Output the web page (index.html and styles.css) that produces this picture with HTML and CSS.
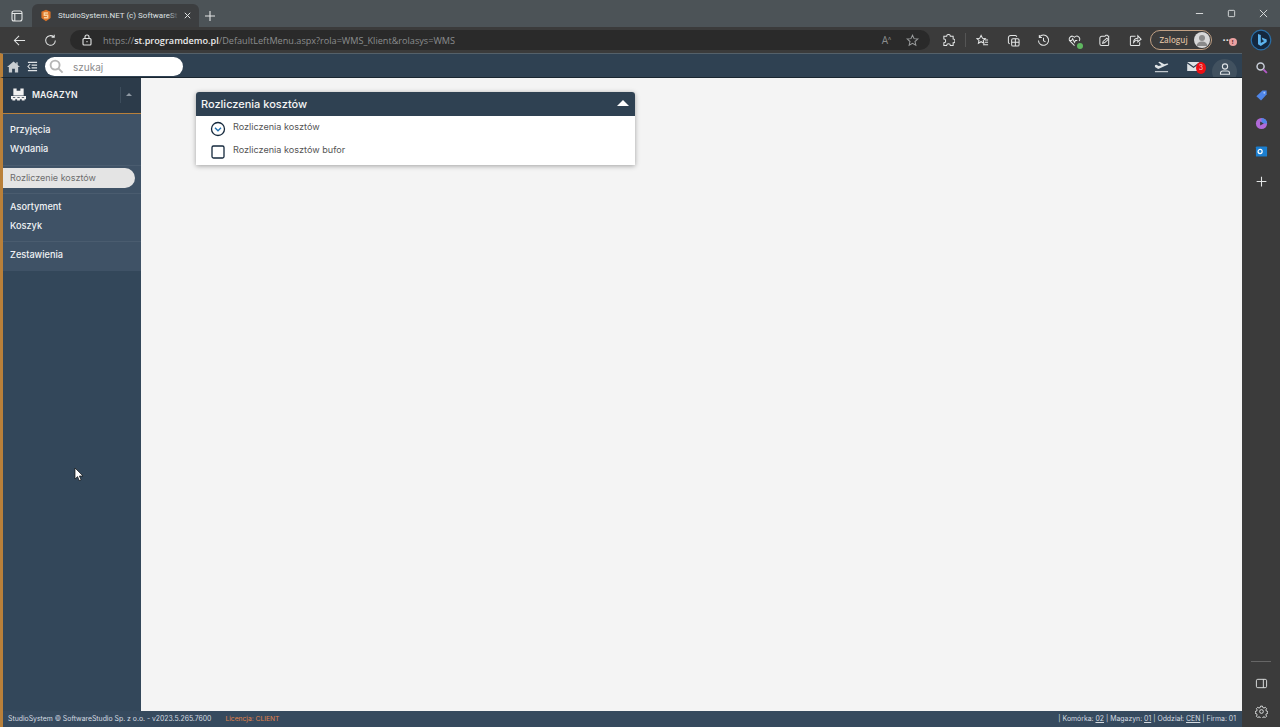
FILE: index.html
```html
<!DOCTYPE html>
<html lang="pl">
<head>
<meta charset="utf-8">
<title>StudioSystem.NET</title>
<link rel="stylesheet" href="styles.css">
</head>
<body>
<div class="tabstrip">
  <svg class="ico tabs-ico" viewBox="0 0 12 12"><rect x="1" y="1" width="10" height="10" rx="2"/><path d="M1 3.5h10M3.8 3.5V11"/></svg>
  <div class="tab">
    <svg class="fav" viewBox="0 0 12 14"><path class="fav-bg" d="M6 0l5.5 2.5V10L6 14 .5 10V2.5z"/><path class="fav-s" d="M8.500 4H4v2.800h4v3H3.500"/></svg>
    <span class="tab-title">StudioSystem.NET (c) SoftwareSt</span>
    <span class="tab-fade"></span>
    <svg class="ico tab-x" viewBox="0 0 10 10"><path d="M2 2l6 6M8 2l-6 6"/></svg>
  </div>
  <svg class="ico new-tab" viewBox="0 0 12 12"><path d="M6 1v10M1 6h10"/></svg>
  <div class="win-controls">
    <svg class="ico win" viewBox="0 0 10 10"><path d="M1 5h8"/></svg>
    <svg class="ico win" viewBox="0 0 10 10"><rect x="1.500" y="1.500" width="7" height="7" rx="1"/></svg>
    <svg class="ico win" viewBox="0 0 10 10"><path d="M1 1l8 8M9 1l-8 8"/></svg>
  </div>
</div>
<div class="toolbar">
  <svg class="ico nav back" viewBox="0 0 14 14"><path d="M13 7H1.500M6.500 2L1.500 7l5 5"/></svg>
  <svg class="ico nav reload" viewBox="0 0 14 14"><path d="M12.200 7a5.200 5.200 0 1 1-1.600-3.800M11 .8v2.800H8.200"/></svg>
  <div class="address">
    <svg class="ico lock" viewBox="0 0 12 12"><rect x="2" y="4.500" width="8" height="6.500" rx="1"/><path d="M4 4.500V3a2 2 0 0 1 4 0v1.500"/><path d="M6 7v1.200"/></svg>
    <span class="url"><span class="url-dim">https://</span><b class="url-host">st.programdemo.pl</b><span class="url-dim">/DefaultLeftMenu.aspx?rola=WMS_Klient&amp;rolasys=WMS</span></span>
    <span class="address-tools">
      <span class="read-a">A<sup>ᴧ</sup></span>
      <svg class="ico tool dim" viewBox="0 0 14 14"><path d="M7 1.300l1.700 3.700 4 .4-3 2.700.9 4L7 10.100l-3.600 2 .9-4-3-2.700 4-.4z"/></svg>
    </span>
  </div>
  <div class="tools">
    <svg class="ico tool" viewBox="0 0 14 14"><path d="M5 2.500a2 2 0 0 1 4 0h3v3a2 2 0 0 1 0 4v3H9a2 2 0 0 0-4 0H2v-3a2 2 0 0 0 0-4v-3z"/></svg>
    <span class="tool-sep"></span>
    <svg class="ico tool" viewBox="0 0 14 14"><path d="M5.500 1.500L7 4.600l3 .3-2.200 2 .6 3-2.900-1.600-2.900 1.600.6-3L1 4.900l3-.3zM9.500 6.500H13M9.500 9H13M7.500 11.500H13"/></svg>
    <svg class="ico tool" viewBox="0 0 14 14"><rect x="5" y="5" width="8" height="8" rx="1.500"/><path d="M9 5v8M5 9h8M3 10.500A2 2 0 0 1 1.500 9V4A2.500 2.500 0 0 1 4 1.500h5A2 2 0 0 1 10.500 3"/></svg>
    <svg class="ico tool" viewBox="0 0 14 14"><path d="M2.500 3.500a5.500 5.500 0 1 1-1 3.500M2.500 1v2.800h2.800M7 4v3.200l2.200 1.300"/></svg>
    <span class="tool-wrap">
      <svg class="ico tool" viewBox="0 0 14 14"><path d="M7 12.500L2 7.500a3 3 0 0 1 5-4 3 3 0 0 1 5 4M1 7h3l1-2 2 4 1-2h2"/></svg>
      <span class="green-dot"></span>
    </span>
    <svg class="ico tool" viewBox="0 0 14 14"><path d="M4 2.500h3.500l1-1.200h1.500l1 1.200h.5v9a1 1 0 0 1-1 1H4a2 2 0 0 1-2-2v-6a2 2 0 0 1 2-2z"/><path d="M5 10l.5-2 4-3.500 1.500 1.500-4 3.500z"/></svg>
    <svg class="ico tool" viewBox="0 0 14 14"><path d="M7 2.500H2.500a1 1 0 0 0-1 1v8a1 1 0 0 0 1 1h8a1 1 0 0 0 1-1V9M5 9c0-3 2-4.500 4.500-4.500V2L13 5.500 9.500 8.500V6.500C7.500 6.500 6 7.500 5 9z"/></svg>
    <div class="signin">
      <span>Zaloguj</span>
      <span class="avatar"><svg viewBox="0 0 16 16"><circle cx="8" cy="6" r="3"/><path d="M2.500 14a5.500 4.500 0 0 1 11 0z"/></svg></span>
    </div>
    <span class="more">···<span class="more-badge">!</span></span>
  </div>
  <svg class="bing" viewBox="0 0 22 22"><circle cx="11" cy="11" r="9.800"/><path d="M8 5l2.800 1v8l3.600-2-1.700-.8-1-2.600 5 1.800v2.600L10.800 17 8 15.300z"/></svg>
</div>
<div class="workspace">
  <div class="app">
    <header class="appbar">
      <svg class="bar-ico home" viewBox="0 0 14 12"><path d="M7 0L0 6h2v6h3.500V8h3v4H12V6h2l-2.500-2.200V1H10v1.500z"/></svg>
      <svg class="bar-ico indent" viewBox="0 0 12 12"><path d="M1 1.500h10M5 4.500h6M5 7.500h6M1 10.500h10M3.500 3.500L1 6l2.500 2.500"/></svg>
      <div class="search">
        <svg class="search-ico" viewBox="0 0 16 16"><circle cx="6.500" cy="6.500" r="4.800"/><path d="M10 10l4.500 4.500"/></svg>
        <span class="search-text">szukaj</span>
      </div>
      <div class="bar-right">
        <svg class="bar-ico plane" viewBox="0 0 16 12"><path d="M1 11h14"/><path class="solid" d="M1 4l1.500-.5 2.500 1.500 3-1-3.500-3L6 .5l5 2.500 3-.8c1.500-.2 1.500 1 .5 1.500L4.500 8 1 6z"/></svg>
        <span class="mail">
          <svg class="bar-ico" viewBox="0 0 14 10"><path class="solid" d="M0 0h14L7 5zM0 1.800V10h14V1.800L7 6.800z"/></svg>
          <span class="mail-badge">3</span>
        </span>
        <span class="user-circle">
          <svg class="bar-ico" viewBox="0 0 12 12"><circle cx="6" cy="3.500" r="2.600"/><path d="M1.500 11.300V10a2 2 0 0 1 2-2h5a2 2 0 0 1 2 2v1.300z"/></svg>
        </span>
      </div>
    </header>
    <div class="app-main">
      <aside class="sidebar">
        <div class="side-head">
          <svg class="side-logo" viewBox="0 0 16 13"><path d="M2.500 0h3.500v2.500h4V0h3.500v7.500h-11zM0 8h16v3.500h-1.500V13h-3v-1.500h-2V13h-3v-1.500h-2V13h-3v-1.500H0zM2 9.300v1h2.500v-1zM6.800 9.300v1h2.500v-1zM11.500 9.300v1H14v-1z"/></svg>
          <span class="side-title">MAGAZYN</span>
          <span class="side-caret"></span>
        </div>
        <nav class="side-menu">
          <div class="menu-group first">
            <a class="menu-item">Przyjęcia</a>
            <a class="menu-item">Wydania</a>
          </div>
          <div class="menu-group single">
            <a class="menu-item active">Rozliczenie kosztów</a>
          </div>
          <div class="menu-group">
            <a class="menu-item">Asortyment</a>
            <a class="menu-item">Koszyk</a>
          </div>
          <div class="menu-group last">
            <a class="menu-item">Zestawienia</a>
          </div>
        </nav>
        <svg class="cursor" viewBox="0 0 10 15"><path d="M1 1v11l2.600-2.400 1.600 4 1.900-.8-1.700-3.800H9z"/></svg>
      </aside>
      <main class="content">
        <section class="panel">
          <div class="panel-head">
            <h2 class="panel-title">Rozliczenia kosztów</h2>
            <span class="panel-caret"></span>
          </div>
          <div class="panel-body">
            <div class="panel-row">
              <svg class="row-ico" viewBox="0 0 16 16"><circle cx="8" cy="8" r="6.500"/><path class="chev" d="M5 6.800l3 3 3-3"/></svg>
              <span class="row-text">Rozliczenia kosztów</span>
            </div>
            <div class="panel-row">
              <svg class="row-ico" viewBox="0 0 16 16"><rect x="2" y="2" width="12" height="12" rx="1.500"/></svg>
              <span class="row-text">Rozliczenia kosztów bufor</span>
            </div>
          </div>
        </section>
      </main>
    </div>
    <footer class="statusbar">
      <span class="status-copy">StudioSystem © SoftwareStudio Sp. z o.o. - v2023.5.265.7600</span>
      <span class="status-lic">Licencja: CLIENT</span>
      <span class="status-right">| Komórka: <u>02</u> | Magazyn: <u>01</u> | Oddział: <u>CEN</u> | Firma: 01</span>
    </footer>
  </div>
  <aside class="edgebar">
    <div class="edge-top">
      <svg class="edge-ico" viewBox="0 0 14 14"><circle class="e-stroke-grey" cx="6" cy="6" r="3.800"/><path class="e-stroke-purple" d="M9 9l3.800 3.800"/></svg>
      <svg class="edge-ico" viewBox="0 0 14 14"><path class="e-blue" d="M8 1.500h4.500V6L6.500 12.500 1.500 7.800z"/><circle class="e-hole" cx="10" cy="4" r="1"/></svg>
      <svg class="edge-ico" viewBox="0 0 14 14"><circle class="e-purple" cx="7" cy="7" r="6"/><path class="e-blue" d="M7 1a6 6 0 0 1 6 6L7 7z"/><path class="e-hole2" d="M5.500 4.800l4 2.200-4 2.200z"/></svg>
      <svg class="edge-ico" viewBox="0 0 14 14"><rect class="e-outlook" x="1" y="1.500" width="12" height="11" rx="1"/><circle class="e-o" cx="5.500" cy="7" r="2.200"/></svg>
      <svg class="edge-ico plus edge-add" viewBox="0 0 12 12"><path d="M6 1.500v9M1.500 6h9"/></svg>
    </div>
    <div class="edge-bottom">
      <span class="edge-rule"></span>
      <svg class="edge-ico plus" viewBox="0 0 14 14"><rect x="1.500" y="2.500" width="11" height="9" rx="1.500"/><path d="M9 2.500v9"/></svg>
      <svg class="edge-ico plus" viewBox="0 0 14 14"><circle cx="7" cy="7" r="2"/><path d="M6 1.200h2l.4 1.500 1.300.6 1.400-.8 1.400 1.400-.8 1.400.6 1.300 1.500.4v2l-1.500.4-.6 1.300.8 1.400-1.400 1.400-1.400-.8-1.300.6-.4 1.300H6l-.4-1.300-1.300-.6-1.400.8-1.400-1.400.8-1.400-.6-1.300-1.500-.4v-2l1.500-.4.6-1.300-.8-1.400 1.400-1.400 1.400.8 1.300-.6z"/></svg>
    </div>
  </aside>
</div>
</body>
</html>
```
FILE: styles.css
```css
* { box-sizing: border-box; }
html, body { margin: 0; height: 100%; }
body {
  width: 1280px;
  height: 727px;
  overflow: hidden;
  display: flex;
  flex-direction: column;
  font-family: "Inter", "Liberation Sans", sans-serif;
  background: #3b3b3b;
}
svg { display: block; flex: none; }
.ico { fill: none; stroke: #e3e5e5; stroke-width: 1.100; }

/* browser tab strip */
.tabstrip {
  height: 27px;
  flex: none;
  background: #4c5357;
  display: flex;
  align-items: flex-end;
  position: relative;
}
.tabs-ico { width: 12px; height: 12px; margin: 0 0 5px 11px; }
.tab {
  width: 167px;
  height: 23px;
  margin-left: 9px;
  background: #3c3e40;
  border-radius: 6px 6px 0 0;
  display: flex;
  align-items: center;
  padding: 0 7px 0 9px;
  position: relative;
}
.fav { width: 10px; height: 13px; }
.fav-bg { fill: #dd7428; }
.fav-s { fill: none; stroke: #f8cf9c; stroke-width: 1.800; }
.tab-title {
  margin-left: 7px;
  font: 8px/12px "Roboto", sans-serif;
  color: #dfe1e2;
  white-space: nowrap;
}
.tab-fade {
  position: absolute;
  left: 136px;
  top: 0;
  bottom: 0;
  width: 12px;
  background: linear-gradient(90deg, rgba(60,62,64,0), #3c3e40 90%);
}
.tab-x { width: 9px; height: 9px; margin-left: auto; position: relative; }
.new-tab { width: 12px; height: 12px; margin: 0 0 5px 5px; }
.win-controls {
  margin-left: auto;
  align-self: flex-start;
  display: flex;
  gap: 23px;
  padding: 9px 12px 0 0;
}
.win { width: 9px; height: 9px; stroke-width: 1; }

/* browser toolbar */
.toolbar {
  height: 26px;
  flex: none;
  background: #3b3b3b;
  display: flex;
  align-items: center;
  position: relative;
}
.nav { width: 13px; height: 13px; }
.back { margin-left: 13px; }
.reload { margin-left: 18px; }
.address {
  width: 860px;
  height: 20px;
  margin-left: 13px;
  background: #2a2a2a;
  border-radius: 10px;
  display: flex;
  align-items: center;
  padding-left: 11px;
}
.lock { width: 12px; height: 12px; }
.url {
  margin-left: 10px;
  padding-top: 1px;
  font: 9.150px/12px "Open Sans", sans-serif;
  white-space: nowrap;
}
.url-dim { color: #8b8d8e; }
.url-host { color: #ebebeb; font-weight: 600; }
.address-tools {
  margin-left: auto;
  display: flex;
  align-items: center;
  gap: 15px;
  padding-right: 11px;
}
.read-a { font: 10px/12px "Open Sans", sans-serif; color: #8b8d8e; }
.read-a sup { font-size: 6px; line-height: 0; }
.tool { width: 13px; height: 13px; }
.dim { stroke: #9a9c9d; }
.tools {
  display: flex;
  align-items: center;
  gap: 17.500px;
  margin-left: 12px;
}
.tool-sep { width: 1px; height: 14px; background: #555; margin: 0 -7px 0 -8px; }
.tool-wrap { position: relative; display: block; }
.green-dot {
  position: absolute;
  right: -2px;
  bottom: -2px;
  width: 6px;
  height: 6px;
  border-radius: 50%;
  background: #5fb760;
}
.signin {
  width: 62px;
  height: 20px;
  margin-left: -9.500px;
  border: 1px solid #c2a184;
  border-radius: 10px;
  display: flex;
  align-items: center;
  justify-content: space-between;
  padding: 0 1px 0 9px;
  font: 600 8px/12px "Open Sans", sans-serif;
  color: #d8ba9e;
}
.avatar {
  width: 16px;
  height: 16px;
  border-radius: 50%;
  background: #d8d8d8;
  overflow: hidden;
}
.avatar svg { width: 16px; height: 16px; fill: #8a8a8a; }
.more {
  position: relative;
  margin-left: -6.500px;
  font: 700 11px/12px "Open Sans", sans-serif;
  color: #e3e5e5;
}
.more-badge {
  position: absolute;
  left: 6px;
  top: 4px;
  width: 8px;
  height: 8px;
  border-radius: 50%;
  background: #eba1a1;
  color: #4a2020;
  font-size: 6px;
  line-height: 8px;
  text-align: center;
}
.bing { width: 22px; height: 22px; margin-left: 18px; }
.bing circle { fill: #14283f; stroke: #2a6fa8; stroke-width: 1.200; }
.bing path { fill: #5db4ee; }

/* layout */
.workspace { flex: 1; min-height: 0; display: flex; }
.app { width: 1242px; display: flex; flex-direction: column; background: #f4f4f4; }

/* app bar */
.appbar {
  height: 25px;
  flex: none;
  background: #2f4152;
  border-top: 1px solid #55616a;
  border-bottom: 1px solid #1a2630;
  border-left: 3px solid #b9803a;
  padding-top: 2px;
  display: flex;
  align-items: center;
  overflow: hidden;
}
.bar-ico { width: 13px; height: 12px; fill: none; stroke: #dfe3e6; stroke-width: 1.100; }
.bar-ico > .solid { fill: #dfe3e6; stroke: none; }
.home { fill: #c9ced2; stroke: none; margin-left: 4px; }
.indent { width: 11px; height: 11px; margin-left: 7px; }
.search {
  width: 138px;
  height: 19px;
  margin-left: 7px;
  background: #fff;
  border-radius: 10px;
  display: flex;
  align-items: center;
  padding-left: 4px;
}
.search-ico { width: 15px; height: 15px; fill: none; stroke: #b5b5b5; stroke-width: 2; }
.search-text { margin-left: 9px; font-size: 10px; color: #8a8a8a; }
.bar-right { margin-left: auto; align-self: stretch; display: flex; align-items: center; }
.plane { width: 15px; height: 12px; }
.mail { position: relative; margin-left: 18px; display: block; }
.mail .bar-ico { width: 13px; height: 9px; }
.mail-badge {
  position: absolute;
  left: 9px;
  top: 0;
  width: 10px;
  height: 12px;
  border-radius: 50%;
  background: #ee0f14;
  color: #f3c8c8;
  font-size: 7px;
  line-height: 12px;
  text-align: center;
}
.user-circle {
  width: 25px;
  height: 25px;
  margin: 3px 5px 0 12px;
  align-self: flex-start;
  border-radius: 50%;
  background: #41515f;
  display: flex;
  align-items: flex-start;
  justify-content: center;
  padding-top: 4px;
  flex: none;
}
.user-circle .bar-ico { width: 12px; height: 12px; }

/* sidebar */
.app-main { flex: 1; min-height: 0; display: flex; }
.sidebar {
  width: 141px;
  flex: none;
  background: #33475a;
  border-left: 3px solid #b9803a;
  position: relative;
}
.side-head {
  height: 36px;
  background: #2c3b4a;
  border-bottom: 1px solid #b9803a;
  display: flex;
  align-items: center;
  padding: 0 0 2px 8px;
}
.side-logo { width: 15px; height: 13px; fill: #f2f2f2; }
.side-title { margin-left: 6px; font-size: 8.700px; font-weight: 600; color: #f2f2f2; letter-spacing: .1px; }
.side-caret {
  margin-left: auto;
  width: 17px;
  height: 16px;
  margin-right: 4px;
  border-left: 1px solid #3d4d5c;
  position: relative;
}
.side-caret::after {
  content: "";
  position: absolute;
  left: 5px;
  top: 6px;
  border: 3px solid transparent;
  border-top: 0;
  border-bottom: 3px solid #8f9aa4;
}
.side-menu { background: #3f5266; }
.menu-group {
  padding: 3px 0 6px;
  border-bottom: 1px solid #4a5c6f;
  display: flex;
  flex-direction: column;
}
.menu-group.first { padding: 6px 0 7px; }
.menu-group.single { padding: 2px 0 5px; }
.menu-group.last { border-bottom: 0; padding: 3px 0 7px; }
.menu-item {
  height: 19px;
  padding-left: 7px;
  font-size: 9.200px;
  line-height: 19px;
  font-weight: 500;
  color: #f1f3f5;
  white-space: nowrap;
}
.menu-item.active {
  width: 132px;
  height: 20px;
  line-height: 20px;
  font-size: 9px;
  background: #e4e4e4;
  color: #6d6d6d;
  font-weight: 400;
  border-radius: 0 10px 10px 0;
}
.cursor {
  position: absolute;
  left: 71px;
  top: 389px;
  width: 10px;
  height: 15px;
  fill: #fff;
  stroke: #111;
  stroke-width: .7;
}

/* content */
.content { flex: 1; background: #f4f4f4; padding: 14px 0 0 55px; }
.panel {
  width: 439px;
  background: #fff;
  box-shadow: 0 1px 5px rgba(0,0,0,.35);
  border-radius: 3px 3px 0 0;
}
.panel-head {
  height: 24px;
  background: #2f4152;
  border-radius: 3px 3px 0 0;
  display: flex;
  align-items: center;
  justify-content: space-between;
  padding: 0 6px 0 5px;
}
.panel-title { margin: 0; font-size: 11px; font-weight: 500; color: #f5f5f5; white-space: nowrap; }
.panel-caret {
  border: 6px solid transparent;
  border-top: 0;
  border-bottom: 6px solid #fff;
  margin-bottom: 2px;
}
.panel-body { height: 49px; padding-top: 1px; display: flex; flex-direction: column; }
.panel-row {
  height: 23px;
  display: flex;
  align-items: flex-start;
  padding-left: 14px;
}
.row-ico { width: 16px; height: 16px; margin-top: 4px; fill: none; stroke: #14283c; stroke-width: 1.300; }
.chev { stroke: #1f6fb0; }
.row-text { margin-left: 7px; margin-top: 3px; font-size: 9.100px; line-height: 14px; color: #555; white-space: nowrap; }

/* status bar */
.statusbar {
  height: 16px;
  flex: none;
  background: #364a5e;
  border-left: 3px solid #b9803a;
  display: flex;
  align-items: center;
  padding: 0 6px 1px 5px;
  font-size: 6.860px;
  color: #d4dae0;
  white-space: nowrap;
}
.status-lic { margin-left: 14px; color: #e0824a; font-size: 6.700px; }
.status-right { margin-left: auto; font-size: 6.900px; }

/* edge sidebar */
.edgebar {
  flex: 1;
  display: flex;
  flex-direction: column;
  justify-content: space-between;
  align-items: center;
  background: #3b3b3b;
}
.edge-top { display: flex; flex-direction: column; align-items: center; gap: 15px; padding-top: 8px; }
.edge-add { margin-top: 2px; }
.edge-bottom { display: flex; flex-direction: column; align-items: center; gap: 15px; padding-bottom: 9px; }
.edge-rule { width: 20px; height: 1px; background: #666; }
.edge-ico { width: 13px; height: 13px; fill: none; }
.plus { stroke: #e3e5e5; stroke-width: 1; }
.e-stroke-grey { stroke: #c8ced8; stroke-width: 1.600; }
.e-stroke-purple { stroke: #b45ac8; stroke-width: 2; }
.e-blue { fill: #4f86e8; }
.e-hole { fill: #a8c6f5; }
.e-purple { fill: #b06ad8; }
.e-hole2 { fill: #3b3b3b; }
.e-outlook { fill: #1b7fd0; }
.e-o { fill: none; stroke: #fff; stroke-width: 1.300; }
```
